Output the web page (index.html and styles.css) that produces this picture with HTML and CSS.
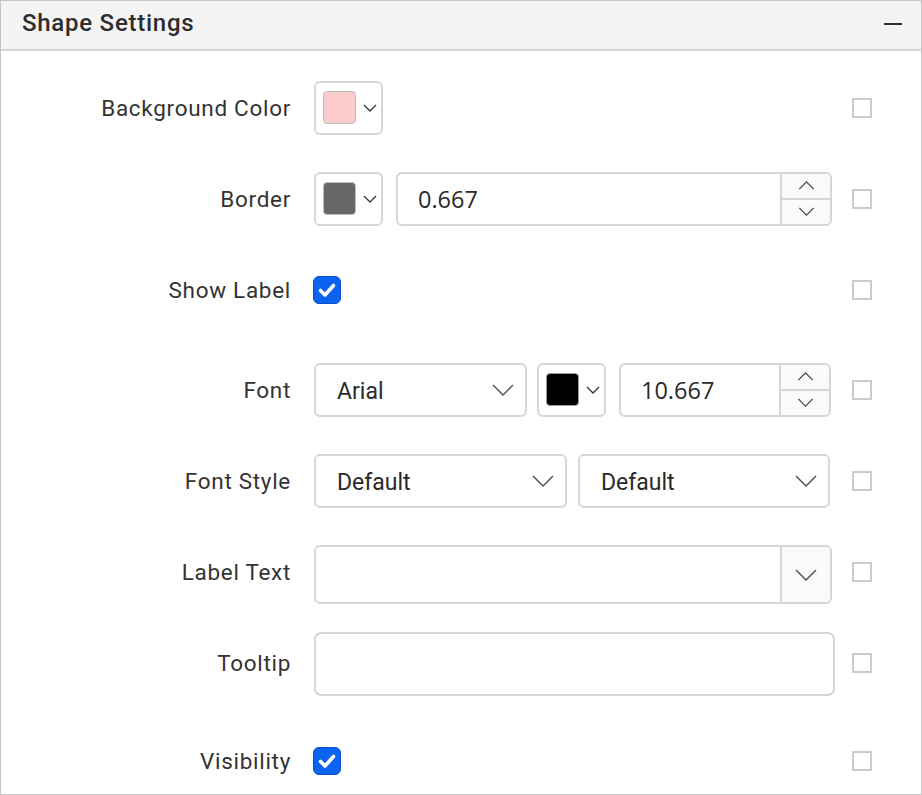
FILE: index.html
```html
<!DOCTYPE html>
<html>
<head>
<meta charset="utf-8">
<link rel="stylesheet" href="styles.css">
</head>
<body>
<div class="panel">
  <div class="header">
    <span class="title">Shape Settings</span>
    <span class="minus"></span>
  </div>
  <div class="content">
    <div class="row">
      <div class="label">Background Color</div>
      <div class="controls">
        <div class="picker"><span class="swatch pink"></span><svg class="chev-s" viewBox="0 0 14 8"><path d="M1 1 L7 7 L13 1"/></svg></div>
      </div>
      <span class="cb"></span>
    </div>
    <div class="row">
      <div class="label">Border</div>
      <div class="controls">
        <div class="picker"><span class="swatch gray"></span><svg class="chev-s" viewBox="0 0 14 8"><path d="M1 1 L7 7 L13 1"/></svg></div>
        <div class="num w-border">
          <span class="num-val">0.667</span>
          <div class="spin">
            <div class="spin-btn"><svg class="chev-sp" viewBox="0 0 18 10"><path d="M1 9 L9 1 L17 9"/></svg></div>
            <div class="spin-btn bottom"><svg class="chev-sp" viewBox="0 0 18 10"><path d="M1 1 L9 9 L17 1"/></svg></div>
          </div>
        </div>
      </div>
      <span class="cb"></span>
    </div>
    <div class="row">
      <div class="label">Show Label</div>
      <div class="controls">
        <span class="check"><svg viewBox="0 0 28 28"><path d="M7.5 14.5 L12 19 L20.5 9.5"/></svg></span>
      </div>
      <span class="cb"></span>
    </div>
    <div class="row row-font">
      <div class="label">Font</div>
      <div class="controls">
        <div class="dd w-font"><span class="dd-val">Arial</span><svg class="chev-l" viewBox="0 0 22 12"><path d="M1 1 L11 11 L21 1"/></svg></div>
        <div class="picker picker-font"><span class="swatch black"></span><svg class="chev-s" viewBox="0 0 14 8"><path d="M1 1 L7 7 L13 1"/></svg></div>
        <div class="num w-fontsize">
          <span class="num-val">10.667</span>
          <div class="spin">
            <div class="spin-btn"><svg class="chev-sp" viewBox="0 0 18 10"><path d="M1 9 L9 1 L17 9"/></svg></div>
            <div class="spin-btn bottom"><svg class="chev-sp" viewBox="0 0 18 10"><path d="M1 1 L9 9 L17 1"/></svg></div>
          </div>
        </div>
      </div>
      <span class="cb"></span>
    </div>
    <div class="row">
      <div class="label">Font Style</div>
      <div class="controls">
        <div class="dd w-style1"><span class="dd-val">Default</span><svg class="chev-l" viewBox="0 0 22 12"><path d="M1 1 L11 11 L21 1"/></svg></div>
        <div class="dd w-style2"><span class="dd-val">Default</span><svg class="chev-l" viewBox="0 0 22 12"><path d="M1 1 L11 11 L21 1"/></svg></div>
      </div>
      <span class="cb"></span>
    </div>
    <div class="row">
      <div class="label">Label Text</div>
      <div class="controls">
        <div class="combo">
          <span class="combo-input"></span>
          <span class="combo-btn"><svg class="chev-l" viewBox="0 0 22 12"><path d="M1 1 L11 11 L21 1"/></svg></span>
        </div>
      </div>
      <span class="cb"></span>
    </div>
    <div class="row">
      <div class="label">Tooltip</div>
      <div class="controls">
        <div class="textbox"></div>
      </div>
      <span class="cb"></span>
    </div>
    <div class="row row-vis">
      <div class="label">Visibility</div>
      <div class="controls">
        <span class="check"><svg viewBox="0 0 28 28"><path d="M7.5 14.5 L12 19 L20.5 9.5"/></svg></span>
      </div>
      <span class="cb"></span>
    </div>
  </div>
</div>
</body>
</html>
```

FILE: styles.css
```css
html, body {
  margin: 0;
  padding: 0;
  background: #ffffff;
}
body {
  font-family: Roboto, "Liberation Sans", sans-serif;
  color: #333333;
}
.panel {
  width: 922px;
  height: 795px;
  box-sizing: border-box;
  border: 1px solid #c6c6c6;
  overflow: hidden;
}
.header {
  height: 50px;
  background: #f4f4f4;
  border-bottom: 2px solid #d4d4d4;
  display: flex;
  align-items: center;
  justify-content: space-between;
  padding: 0 19px 4px 21px;
  box-sizing: border-box;
}
.title {
  font-size: 24px;
  font-weight: 500;
  color: #2d2d2d;
  letter-spacing: 0.75px;
}
.minus {
  width: 18px;
  height: 2.5px;
  background: #2d2d2d;
  margin-top: 2px;
}
.content {
  padding-top: 11px;
}
.row {
  height: 91px;
  display: flex;
  align-items: center;
}
.row-font { margin-top: 9px; }
.row-vis { margin-top: 7px; }
.label {
  width: 290px;
  margin-right: 23px;
  text-align: right;
  font-size: 22.5px;
  letter-spacing: 0.7px;
  color: #333333;
}
.controls {
  width: 521px;
  display: flex;
  align-items: center;
}
.cb {
  width: 20px;
  height: 20px;
  box-sizing: border-box;
  border: 2px solid #cbcbcb;
  margin-left: 17px;
}
/* color picker */
.picker {
  width: 69px;
  height: 54px;
  box-sizing: border-box;
  border: 2px solid #d6d6d6;
  border-radius: 6px;
  display: flex;
  align-items: center;
  padding-left: 7px;
  margin-right: 13px;
}
.picker-font {
  margin-left: 10px;
  margin-right: 13px;
}
.swatch {
  width: 33px;
  height: 33px;
  box-sizing: border-box;
  border: 1.5px solid #bdbdbd;
  border-radius: 4px;
  margin-right: 7px;
}
.pink { background: #f9cbcb; }
.gray { background: #686868; }
.black { background: #000000; border-color: #9a9a9a; }
.chev-s {
  width: 14px;
  height: 8px;
  fill: none;
  stroke: #333;
  stroke-width: 1.3;
}
/* numeric */
.num {
  height: 54px;
  box-sizing: border-box;
  border: 2px solid #d6d6d6;
  border-radius: 6px;
  display: flex;
  align-items: stretch;
  overflow: hidden;
}
.w-border { width: 436px; }
.w-fontsize { width: 212px; }
.num-val {
  flex: 1;
  display: flex;
  align-items: center;
  padding-left: 20px;
  font-family: "Open Sans", sans-serif;
  font-size: 23.5px;
  color: #2a2a2a;
}
.spin {
  width: 48px;
  border-left: 2px solid #d6d6d6;
  background: #fafafa;
  display: flex;
  flex-direction: column;
}
.spin-btn {
  flex: 1;
  display: flex;
  align-items: center;
  justify-content: center;
}
.spin-btn.bottom {
  border-top: 2px solid #d6d6d6;
}
.chev-sp {
  width: 17px;
  height: 9px;
  fill: none;
  stroke: #444;
  stroke-width: 1.4;
}
/* checkbox */
.check {
  width: 28px;
  height: 28px;
  box-sizing: border-box;
  background: #0b63f0;
  border: 1.5px solid #0650c8;
  border-radius: 6px;
  display: flex;
  align-items: center;
  justify-content: center;
  margin-left: -1px;
}
.check svg {
  width: 28px;
  height: 28px;
  flex: none;
  fill: none;
  stroke: #ffffff;
  stroke-width: 3.6;
  stroke-linecap: round;
  stroke-linejoin: round;
}
/* dropdowns */
.dd {
  height: 54px;
  box-sizing: border-box;
  border: 2px solid #d6d6d6;
  border-radius: 6px;
  display: flex;
  align-items: center;
  justify-content: space-between;
  padding: 0 11px 0 21px;
}
.w-font { width: 213px; }
.w-style1 { width: 253px; margin-right: 11px; }
.w-style2 { width: 252px; }
.dd-val {
  font-size: 23px;
  color: #2a2a2a;
  padding-top: 3px;
}
.chev-l {
  width: 22px;
  height: 12px;
  fill: none;
  stroke: #555;
  stroke-width: 1.5;
}
.combo {
  width: 518px;
  height: 59px;
  box-sizing: border-box;
  border: 2px solid #d6d6d6;
  border-radius: 6px;
  display: flex;
  overflow: hidden;
  margin-top: 6px;
}
.combo-input { flex: 1; }
.combo-btn {
  width: 48px;
  border-left: 2px solid #d6d6d6;
  background: #fafafa;
  display: flex;
  align-items: center;
  justify-content: center;
}
.textbox {
  width: 521px;
  height: 64px;
  box-sizing: border-box;
  border: 2px solid #d6d6d6;
  border-radius: 7px;
  margin-top: 3px;
}
```
